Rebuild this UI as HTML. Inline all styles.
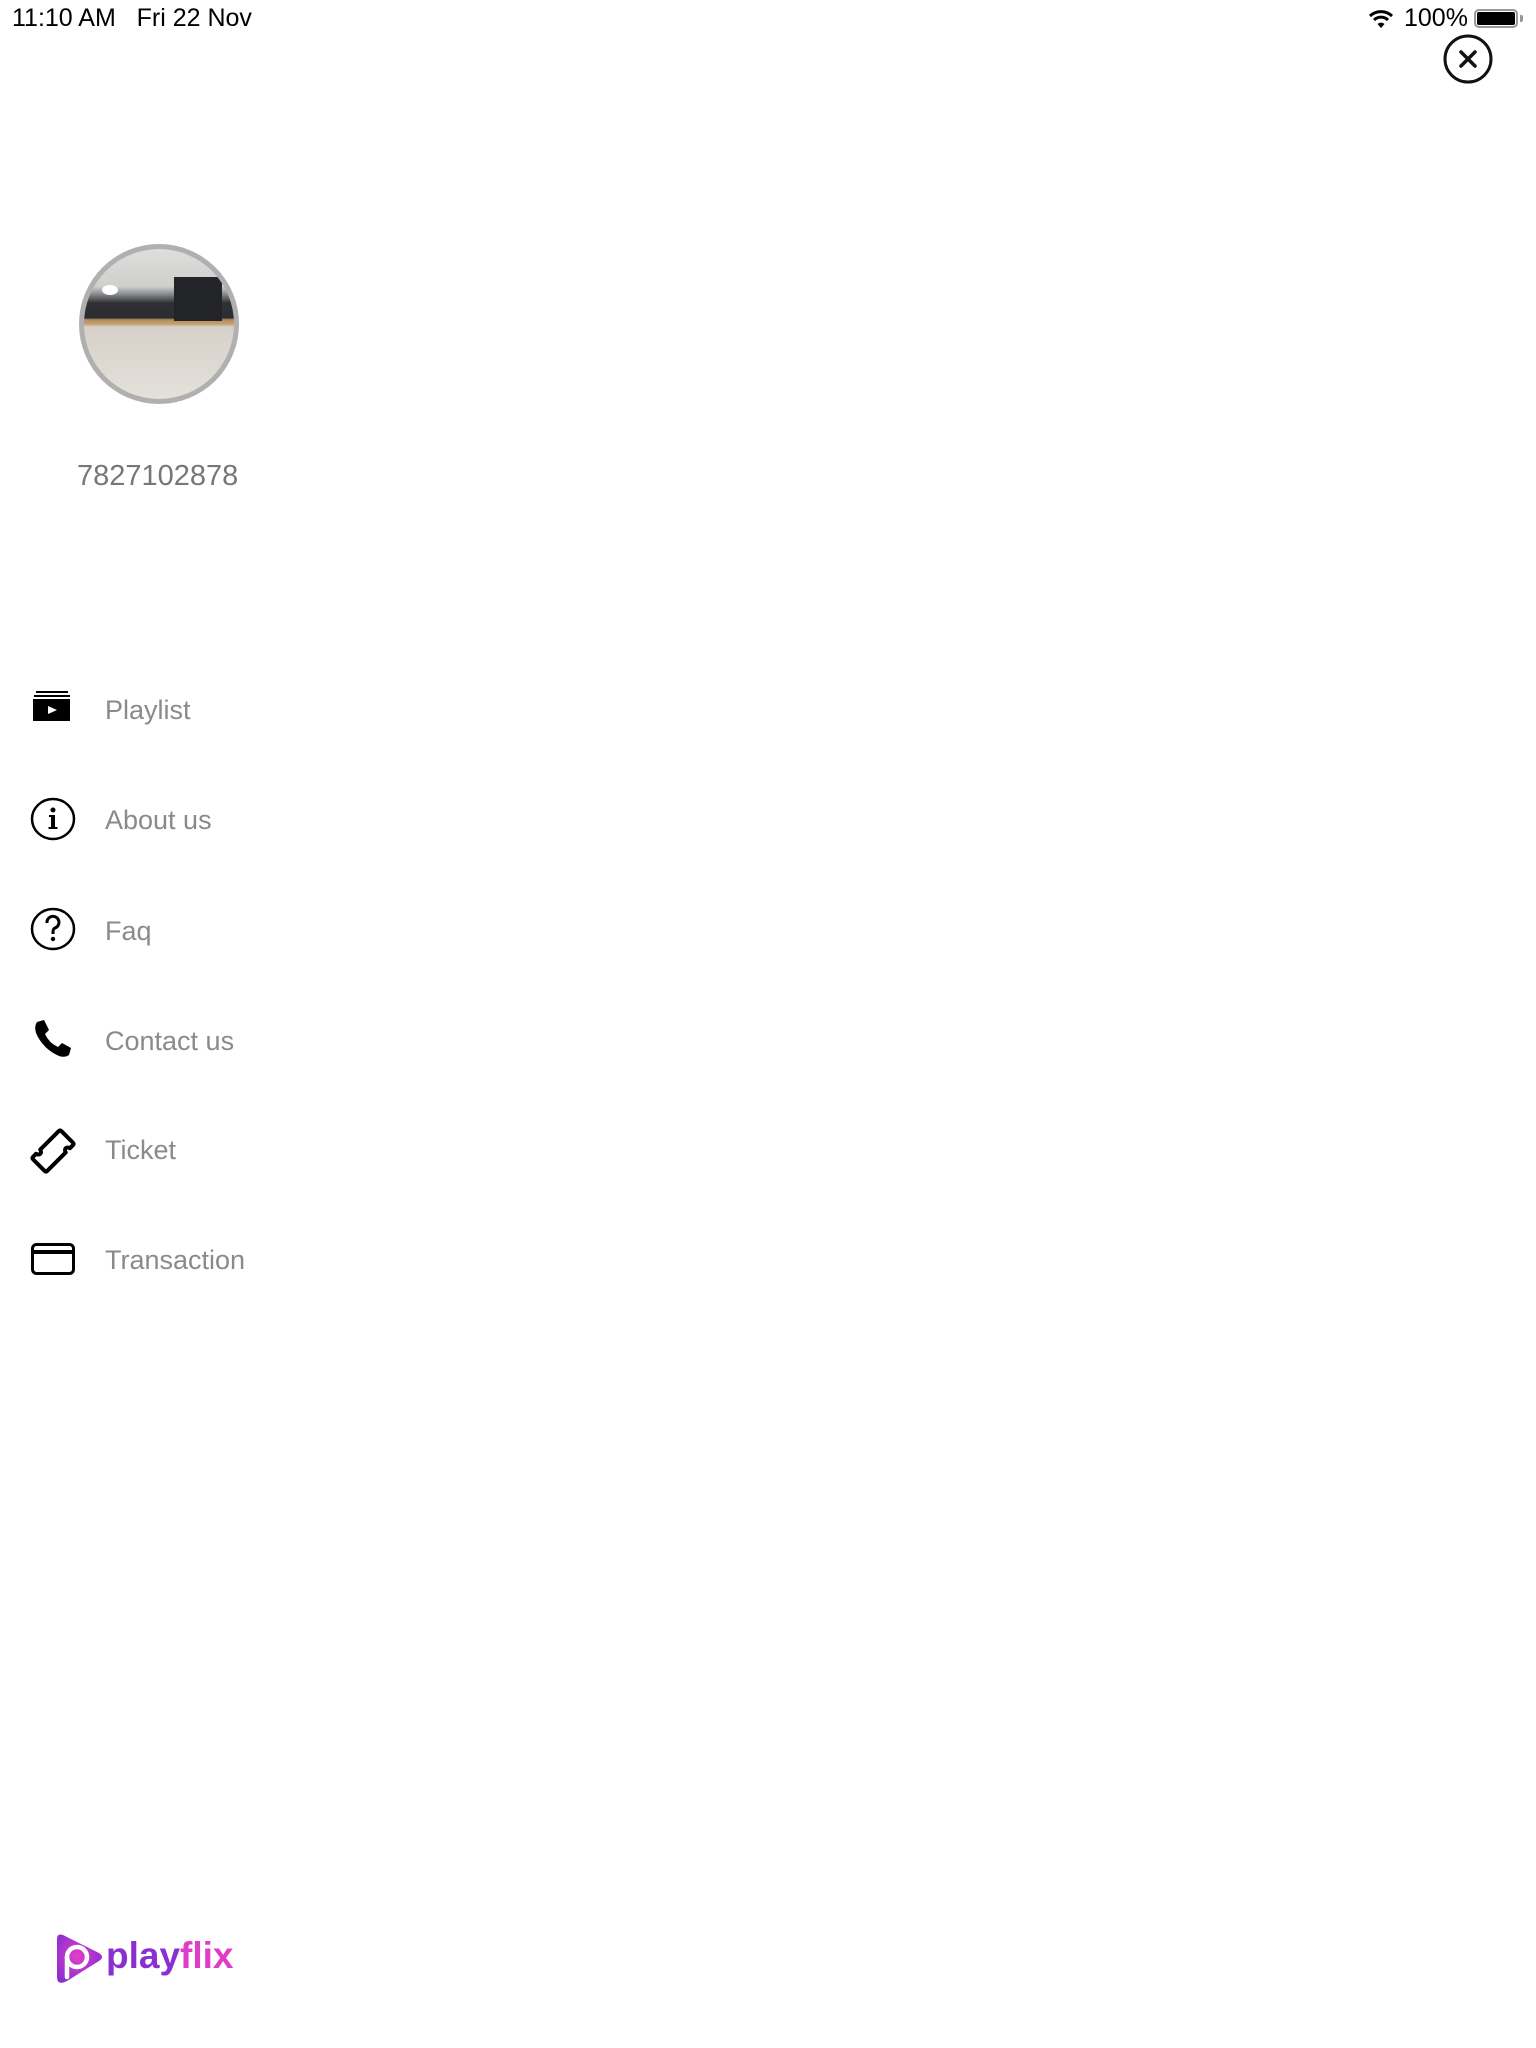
<!DOCTYPE html>
<html><head><meta charset="utf-8">
<style>
html,body{margin:0;padding:0;background:#fff;}
body{width:1536px;height:2048px;position:relative;overflow:hidden;font-family:"Liberation Sans",sans-serif;}
.abs{position:absolute;}
.sb{top:4px;font-size:25px;color:#000;white-space:nowrap;}
.item{position:absolute;left:105px;font-size:27px;color:#8a8a8a;line-height:1;}
.ic{position:absolute;}
</style></head><body>
<div class="abs sb" style="left:12px;">11:10 AM&nbsp;&nbsp;&nbsp;Fri 22 Nov</div>
<svg class="abs" style="left:1368px;top:8px" width="26" height="22" viewBox="0 0 26 22">
<path d="M2 8 A16 16 0 0 1 24 8" fill="none" stroke="#000" stroke-width="3"/>
<path d="M6 12 A10 10 0 0 1 20 12" fill="none" stroke="#000" stroke-width="3"/>
<path d="M9.5 16 A5 5 0 0 1 16.5 16 L13 20 Z" fill="#000"/>
</svg>
<div class="abs sb" style="left:1404px;">100%</div>
<div class="abs" style="left:1474px;top:9px;width:44px;height:19px;border:2px solid #999;border-radius:5px;box-sizing:border-box;"></div>
<div class="abs" style="left:1477px;top:12px;width:38px;height:13px;background:#000;border-radius:2px;"></div>
<div class="abs" style="left:1520px;top:15px;width:3px;height:7px;background:#999;border-radius:0 2px 2px 0;"></div>

<svg class="abs" style="left:1442px;top:33px" width="52" height="52" viewBox="0 0 52 52">
<circle cx="26" cy="26" r="23" fill="none" stroke="#111" stroke-width="3"/>
<path d="M19 19 L33 33 M33 19 L19 33" stroke="#111" stroke-width="3.5" stroke-linecap="round"/>
</svg>

<div class="abs" style="left:79px;top:244px;width:160px;height:160px;border-radius:50%;background:#b0b0b0;"></div>
<div class="abs" style="left:84px;top:249px;width:150px;height:150px;border-radius:50%;overflow:hidden;background:linear-gradient(#dedede 0%,#cfcfcc 25%,#8a8c90 30%,#2e3034 36%,#2b2d30 46%,#b08a5c 47%,#c8a070 50%,#d6d2ca 52%,#e4e0da 100%);">
<div style="position:absolute;left:90px;top:28px;width:48px;height:44px;background:#222427;"></div>
<div style="position:absolute;left:18px;top:36px;width:16px;height:10px;background:#fff;border-radius:50%;"></div>
</div>
<div class="abs" style="left:77px;top:460px;font-size:29px;color:#777;">7827102878</div>

<svg class="ic" style="left:33px;top:691px" width="38" height="30" viewBox="0 0 38 30">
<rect x="3" y="0" width="32" height="2" fill="#000"/>
<rect x="1" y="4" width="36" height="2" fill="#000"/>
<rect x="0" y="8" width="37" height="22" fill="#000"/>
<path d="M15 15 L24 19 L15 23 Z" fill="#fff"/>
</svg>
<div class="item" style="top:697px;">Playlist</div>

<svg class="ic" style="left:30px;top:797px" width="46" height="44" viewBox="0 0 46 44">
<ellipse cx="23" cy="22" rx="21" ry="20" fill="none" stroke="#000" stroke-width="2.5"/>
<circle cx="23" cy="13" r="2.5" fill="#000"/>
<path d="M19 18 H25 V30 H27.5 V32 H18.5 V30 H21 V20 H19 Z" fill="#000"/>
</svg>
<div class="item" style="top:807px;">About us</div>

<svg class="ic" style="left:30px;top:907px" width="46" height="44" viewBox="0 0 46 44">
<ellipse cx="23" cy="22" rx="21" ry="20" fill="none" stroke="#000" stroke-width="2.5"/>
<path d="M17 16 A6 6 0 1 1 25 21 Q23 22 23 25 V27" fill="none" stroke="#000" stroke-width="3"/>
<circle cx="23" cy="32" r="2.2" fill="#000"/>
</svg>
<div class="item" style="top:918px;">Faq</div>

<svg class="ic" style="left:33px;top:1019px" width="40" height="40" viewBox="0 0 40 40">
<path d="M4 3 L11 1 L16 11 L12 15 Q16 24 25 28 L29 24 L38 29 L36 36 Q32 39 26 37 Q10 30 3 14 Q1 7 4 3 Z" fill="#000"/>
</svg>
<div class="item" style="top:1028px;">Contact us</div>

<svg class="ic" style="left:28px;top:1126px" width="50" height="50" viewBox="0 0 50 50">
<g transform="rotate(45 25 25)">
<path d="M15 7 Q15 5 17 5 H33 Q35 5 35 7 V11 Q32 12 32 14 Q32 16 35 17 V43 Q35 45 33 45 H17 Q15 45 15 43 V39 Q18 38 18 36 Q18 34 15 33 Z" fill="none" stroke="#000" stroke-width="4" stroke-linejoin="round"/>
</g>
</svg>
<div class="item" style="top:1137px;">Ticket</div>

<svg class="ic" style="left:31px;top:1243px" width="44" height="32" viewBox="0 0 44 32">
<rect x="1.5" y="1.5" width="41" height="29" rx="4" fill="none" stroke="#000" stroke-width="3"/>
<rect x="1.5" y="7" width="41" height="4" fill="#000"/>
</svg>
<div class="item" style="top:1247px;">Transaction</div>

<svg class="abs" style="left:55px;top:1933px" width="50" height="52" viewBox="0 0 50 52">
<defs><radialGradient id="g" cx="0.45" cy="0.45" r="0.6"><stop offset="0" stop-color="#e040c8"/><stop offset="1" stop-color="#8a2fd0"/></radialGradient></defs>
<path d="M2 6 Q2 0 8 2 L44 20 Q50 24 44 28 L12 48 Q2 53 2 44 Z" fill="url(#g)"/>
<circle cx="22" cy="24" r="10" fill="none" stroke="#fff" stroke-width="4.5"/>
<path d="M12 24 V44" stroke="#fff" stroke-width="4.5" stroke-linecap="round"/>
</svg>
<div class="abs" style="left:106px;top:1937px;font-size:37px;font-weight:bold;line-height:1;"><span style="color:#8a2fd0">play</span><span style="color:#e03cc8">flix</span></div>
</body></html>
